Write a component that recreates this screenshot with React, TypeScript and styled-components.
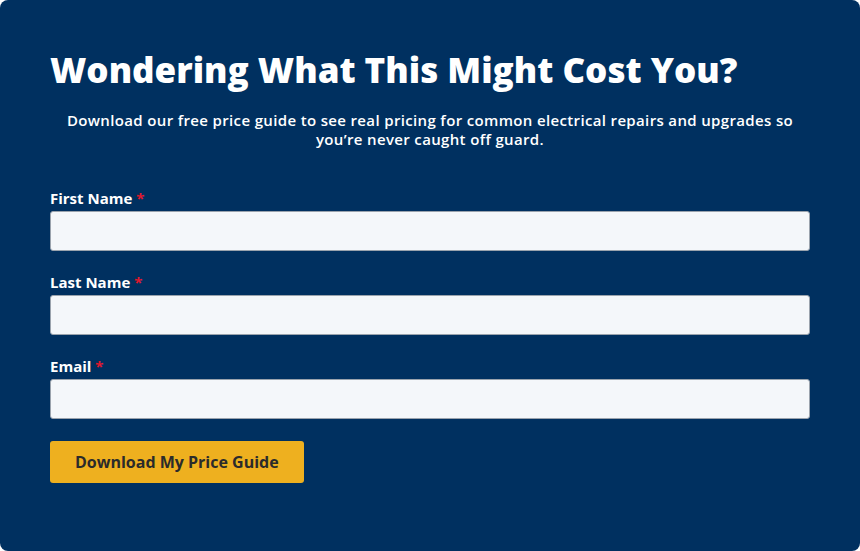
import React from 'react';
import styled, { createGlobalStyle } from 'styled-components';

const GlobalStyle = createGlobalStyle`
  html, body {
    margin: 0;
    padding: 0;
    background: #ffffff;
  }
  body {
    font-family: 'Open Sans', 'Liberation Sans', sans-serif;
  }
`;

const Card = styled.section`
  box-sizing: border-box;
  width: 860px;
  height: 551px;
  background-color: #003060;
  border-radius: 8px;
  padding: 48px 50px 0 50px;
  color: #ffffff;
`;

const Title = styled.h2`
  margin: 0;
  font-size: 35px;
  font-weight: 800;
  line-height: 44px;
`;

const Intro = styled.p`
  margin: 19px 0 40px;
  padding: 0 14px;
  font-size: 15px;
  font-weight: 600;
  line-height: 19px;
  letter-spacing: 0.35px;
  text-align: center;
`;

const Form = styled.form`
  display: flex;
  flex-direction: column;
`;

const Field = styled.div`
  display: flex;
  flex-direction: column;
  margin-bottom: 22px;
`;

const Label = styled.label`
  font-size: 15px;
  font-weight: 700;
  line-height: 18px;
  margin-bottom: 4px;
`;

const Required = styled.span`
  color: #e0182d;
  margin-left: 4px;
`;

const Input = styled.input`
  box-sizing: border-box;
  height: 40px;
  width: 100%;
  background: #f4f7fa;
  border: 1px solid #9aa3ad;
  border-radius: 3px;
  padding: 0 12px;
  font-size: 15px;
  font-family: inherit;
`;

const Button = styled.button`
  align-self: flex-start;
  height: 42px;
  padding: 0 25px;
  background: #eeb01f;
  color: #2b2b2b;
  border: none;
  border-radius: 3px;
  font-family: inherit;
  font-size: 16px;
  font-weight: 700;
  cursor: pointer;
`;

const fields = [
  { id: 'first', label: 'First Name', type: 'text' },
  { id: 'last', label: 'Last Name', type: 'text' },
  { id: 'email', label: 'Email', type: 'email' },
];

function App() {
  return (
    <>
      <GlobalStyle />
      <Card>
        <Title>Wondering What This Might Cost You?</Title>
        <Intro>
          Download our free price guide to see real pricing for common electrical repairs and upgrades so
          you’re never caught off guard.
        </Intro>
        <Form onSubmit={e => e.preventDefault()}>
          {fields.map(field => (
            <Field key={field.id}>
              <Label htmlFor={field.id}>
                {field.label}
                <Required>*</Required>
              </Label>
              <Input id={field.id} type={field.type} />
            </Field>
          ))}
          <Button type='submit'>Download My Price Guide</Button>
        </Form>
      </Card>
    </>
  );
}

export default App;
